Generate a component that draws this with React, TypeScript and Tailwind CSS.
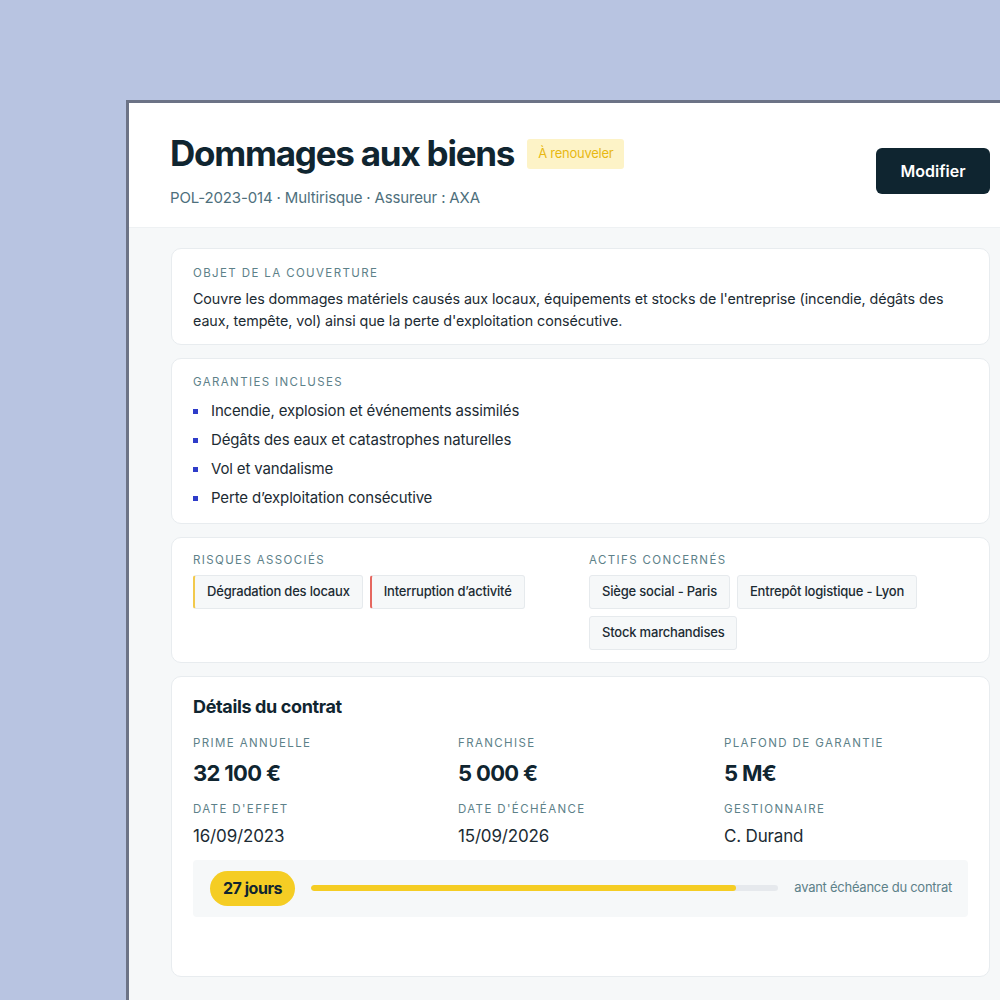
const guarantees = [
  "Incendie, explosion et événements assimilés",
  "Dégâts des eaux et catastrophes naturelles",
  "Vol et vandalisme",
  "Perte d’exploitation consécutive",
];

const risks = [
  { label: "Dégradation des locaux", edge: "border-l-[#f2c94c]" },
  { label: "Interruption d’activité", edge: "border-l-[#e5675f]" },
];

const assets = ["Siège social - Paris", "Entrepôt logistique - Lyon", "Stock marchandises"];

const details = [
  { label: "Prime annuelle", value: "32 100 €", strong: true },
  { label: "Franchise", value: "5 000 €", strong: true },
  { label: "Plafond de garantie", value: "5 M€", strong: true },
  { label: "Date d'effet", value: "16/09/2023", strong: false },
  { label: "Date d'échéance", value: "15/09/2026", strong: false },
  { label: "Gestionnaire", value: "C. Durand", strong: false },
];

const progress = 91;

function Label({ children }: { children: React.ReactNode }) {
  return (
    <p className="text-[11.5px] uppercase tracking-[0.12em] text-[#5d8189] leading-none">{children}</p>
  );
}

export default function App() {
  return (
    <div
      className="w-[1000px] h-[1000px] overflow-hidden bg-[#b8c4e1] pt-[100px] pl-[126px]"
      style={{ fontFamily: "Inter, 'Noto Sans', sans-serif" }}
    >
      <div className="w-[904px] h-[920px] border-l-[3px] border-t-[3px] border-[#6c7386] bg-[#f6f8f9]">
        {/* Header */}
        <header className="bg-white h-[125px] pl-[41px] pr-[40px] pt-[33px] flex justify-between border-b border-[#eef1f3]">
          <div>
            <div className="flex items-center gap-[13px]">
              <h1 className="text-[35px] font-bold tracking-[-0.035em] text-[#102530] leading-none">
                Dommages aux biens
              </h1>
              <span className="bg-[#fdf3c7] text-[#e8b812] text-[13px] tracking-[-0.02em] rounded-[3px] h-[30px] px-[11px] flex items-center">
                À renouveler
              </span>
            </div>
            <p className="mt-[19px] text-[15px] tracking-[-0.01em] text-[#4e6f7c] leading-none">
              POL-2023-014 · Multirisque · Assureur : AXA
            </p>
          </div>
          <button className="mt-[12px] h-[46px] w-[114px] rounded-[6px] bg-[#0f2530] text-white text-[16px] font-semibold">
            Modifier
          </button>
        </header>

        {/* Body */}
        <div className="pl-[42px] pr-[40px] pt-[20px] flex flex-col gap-[13px]">
          <section className="bg-white border border-[#e8ecef] rounded-[10px] px-[21px] pt-[19px] pb-[12px]">
            <Label>Objet de la couverture</Label>
            <p className="mt-[8px] max-w-[752px] text-[14.3px] leading-[22px] tracking-[-0.005em] text-[#1c2b33]">
              Couvre les dommages matériels causés aux locaux, équipements et stocks de l'entreprise (incendie, dégâts des
              eaux, tempête, vol) ainsi que la perte d'exploitation consécutive.
            </p>
          </section>

          <section className="bg-white border border-[#e8ecef] rounded-[10px] px-[21px] pt-[18px] pb-[10px]">
            <Label>Garanties incluses</Label>
            <ul className="mt-[9px]">
              {guarantees.map((g) => (
                <li key={g} className="flex items-center h-[29px] text-[15px] tracking-[-0.01em] text-[#1c2b33]">
                  <span className="w-[5px] h-[5px] bg-[#2e3cc9] mr-[13px]" />
                  {g}
                </li>
              ))}
            </ul>
          </section>

          <section className="bg-white border border-[#e8ecef] rounded-[10px] px-[21px] pt-[17px] pb-[12px] grid grid-cols-[396px_1fr]">
            <div>
              <Label>Risques associés</Label>
              <div className="mt-[8px] flex flex-wrap gap-[7px]">
                {risks.map((r) => (
                  <span
                    key={r.label}
                    className={`h-[34px] px-[12px] flex items-center bg-[#f6f8f9] border border-[#e6eaed] border-l-2 ${r.edge} rounded-[3px] text-[13px] font-medium tracking-[-0.015em] text-[#1c2b33]`}
                  >
                    {r.label}
                  </span>
                ))}
              </div>
            </div>
            <div>
              <Label>Actifs concernés</Label>
              <div className="mt-[8px] flex flex-wrap gap-[7px]">
                {assets.map((a) => (
                  <span
                    key={a}
                    className="h-[34px] px-[12px] flex items-center bg-[#f6f8f9] border border-[#e6eaed] rounded-[3px] text-[13px] font-medium tracking-[-0.015em] text-[#1c2b33]"
                  >
                    {a}
                  </span>
                ))}
              </div>
            </div>
          </section>

          <section className="bg-white border border-[#e8ecef] rounded-[10px] px-[21px] pt-[21px] h-[301px]">
            <h2 className="text-[18px] font-bold tracking-[-0.02em] text-[#102530] leading-none">Détails du contrat</h2>
            <div className="mt-[22px] grid grid-cols-[265px_266px_1fr] gap-y-[20px]">
              {details.map((d) => (
                <div key={d.label}>
                  <Label>{d.label}</Label>
                  <p
                    className={
                      d.strong
                        ? "mt-[13px] text-[22px] font-bold tracking-[-0.03em] text-[#102530] leading-none"
                        : "mt-[12px] text-[17px] tracking-[-0.01em] text-[#1c2b33] leading-none"
                    }
                  >
                    {d.value}
                  </p>
                </div>
              ))}
            </div>
            <div className="mt-[15px] h-[57px] bg-[#f6f8f9] rounded-[4px] flex items-center pl-[17px] pr-[16px] gap-[16px]">
              <span className="h-[35px] px-[13px] rounded-full bg-[#f5cd24] flex items-center text-[16px] font-bold tracking-[-0.03em] text-[#102530]">
                27 jours
              </span>
              <div className="flex-1 h-[6px] bg-[#e6e9ed] rounded-full overflow-hidden">
                <div className="h-full bg-[#f5cd24] rounded-full" style={{ width: `${progress}%` }} />
              </div>
              <span className="text-[13px] tracking-[-0.02em] text-[#5d8189]">avant échéance du contrat</span>
            </div>
          </section>
        </div>
      </div>
    </div>
  );
}
